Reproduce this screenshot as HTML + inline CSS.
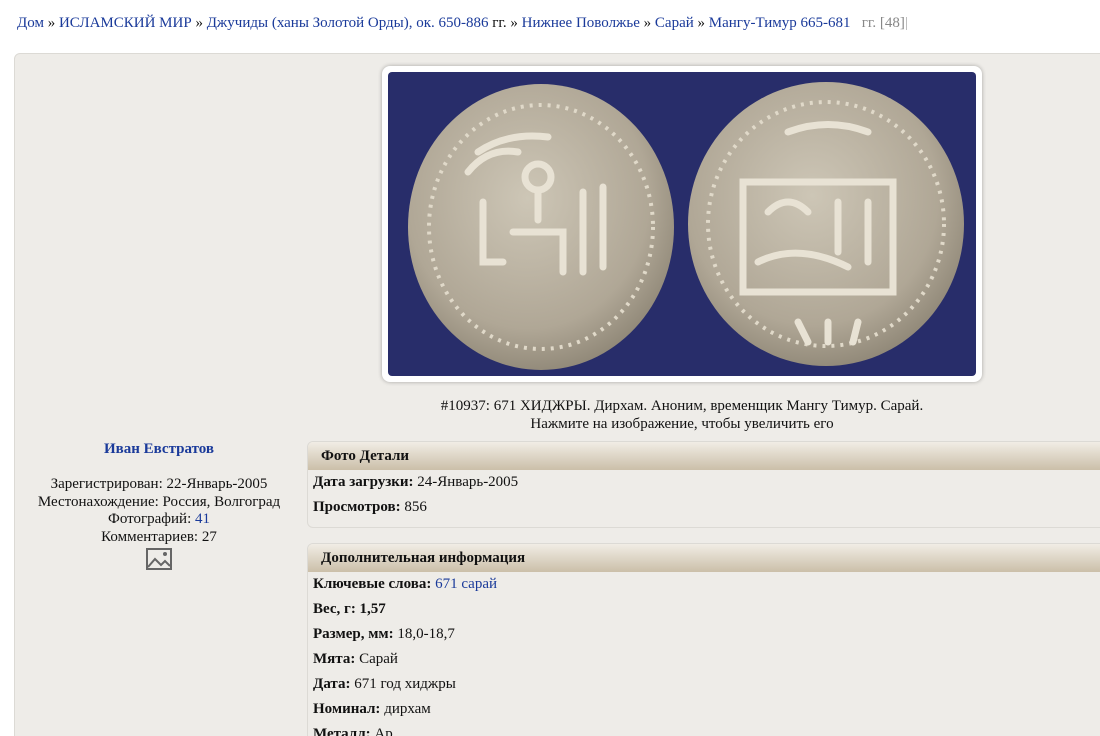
<!DOCTYPE html>
<html><head><meta charset="utf-8"><style>
*{margin:0;padding:0;box-sizing:border-box}
html,body{width:1100px;height:736px;overflow:hidden}
body{background:#fff;font-family:"Liberation Serif",serif;font-size:15px;color:#111;position:relative}
a{color:#1a3a9a;text-decoration:none}
.abs{position:absolute;white-space:nowrap}
.panel{position:absolute;left:14px;top:53px;width:1100px;height:700px;background:#eeece8;border:1px solid #dcdad5;border-radius:6px}
.box{position:absolute;left:307px;width:800px;border:1px solid #dcdad5;border-radius:6px;background:#eeece8;overflow:hidden}
.hd{height:28px;background:linear-gradient(#f1ede5,#cbbfa9);font-weight:bold;padding:6px 0 0 13px}
.row{height:25px;padding:4px 0 0 5px}
b{font-weight:bold}
</style></head><body>
<div class="abs" style="left:17px;top:15px;font-size:15px">
<a>Дом</a> » <a>ИСЛАМСКИЙ МИР</a> » <a>Джучиды (ханы Золотой Орды), ок. 650-886 </a><span style="color:#111">гг.</span> » <a>Нижнее Поволжье</a> » <a>Сарай</a> » <a>Мангу-Тимур 665-681</a> &nbsp; <span style="color:#888">гг. [48]</span><span style="color:#aaa">|</span>
</div>
<div class="panel"></div>
<div class="abs" style="left:382px;top:66px;width:600px;height:316px;background:#fff;border-radius:8px;box-shadow:0 0 4px rgba(0,0,0,.3)"></div>
<svg class="abs" style="left:388px;top:72px" width="588" height="304" viewBox="0 0 588 304">
<defs>
<radialGradient id="g" cx="45%" cy="40%" r="65%"><stop offset="0" stop-color="#cdc6b6"/><stop offset=".7" stop-color="#b0a796"/><stop offset="1" stop-color="#8a8272"/></radialGradient>
</defs>
<rect width="588" height="304" rx="4" fill="#282d6a"/>
<ellipse cx="153" cy="155" rx="133" ry="143" fill="url(#g)"/>
<ellipse cx="153" cy="155" rx="112" ry="122" fill="none" stroke="#e0d9c9" stroke-width="4" stroke-dasharray="3 6"/>
<ellipse cx="438" cy="152" rx="138" ry="142" fill="url(#g)"/>
<ellipse cx="438" cy="152" rx="118" ry="122" fill="none" stroke="#e0d9c9" stroke-width="4" stroke-dasharray="3 6"/>
<g stroke="#e8e2d4" stroke-width="7" fill="none" stroke-linecap="round">
<circle cx="150" cy="105" r="13"/><path d="M150 118v30M125 160h50v40M95 130v60h20M195 120v80M215 115v80M80 100q20-25 50-20M90 80q30-20 70-15"/>
<path d="M355 110h150v110h-150zM380 140q20-20 40 0M450 130v50M480 130v60M370 190q40-20 90 5M400 60q40-15 80 0M410 250l10 20M440 250v20M470 250l-5 20"/>
</g>
</svg>
<div class="abs" style="left:382px;width:600px;top:397px;text-align:center;line-height:18px">#10937: 671 ХИДЖРЫ. Дирхам. Аноним, временщик Мангу Тимур. Сарай.<br>Нажмите на изображение, чтобы увеличить его</div>
<div class="abs" style="left:20px;width:278px;top:441px;text-align:center;line-height:17.5px">
<a style="font-weight:bold">Иван Евстратов</a><br><br>
Зарегистрирован: 22-Январь-2005<br>Местонахождение: Россия, Волгоград<br>Фотографий: <a>41</a><br>Комментариев: 27
</div>
<svg class="abs" style="left:146px;top:548px" width="26" height="22" viewBox="0 0 26 22"><rect x="1" y="1" width="24" height="20" fill="none" stroke="#666" stroke-width="2"/><path d="M2 19l7-8 6 6 4-4 5 5" fill="none" stroke="#666" stroke-width="2"/><circle cx="19" cy="6" r="2" fill="#666"/></svg>
<div class="box" style="top:441px;height:87px"><div class="hd">Фото Детали</div>
<div class="row"><b>Дата загрузки:</b> 24-Январь-2005</div>
<div class="row"><b>Просмотров:</b> 856</div></div>
<div class="box" style="top:543px;height:220px"><div class="hd">Дополнительная информация</div>
<div class="row"><b>Ключевые слова:</b> <a>671 сарай</a></div>
<div class="row"><b>Вес, г: 1,57</b></div>
<div class="row"><b>Размер, мм:</b> 18,0-18,7</div>
<div class="row"><b>Мята:</b> Сарай</div>
<div class="row"><b>Дата:</b> 671 год хиджры</div>
<div class="row"><b>Номинал:</b> дирхам</div>
<div class="row"><b>Металл:</b> Ар</div></div>
</body></html>
